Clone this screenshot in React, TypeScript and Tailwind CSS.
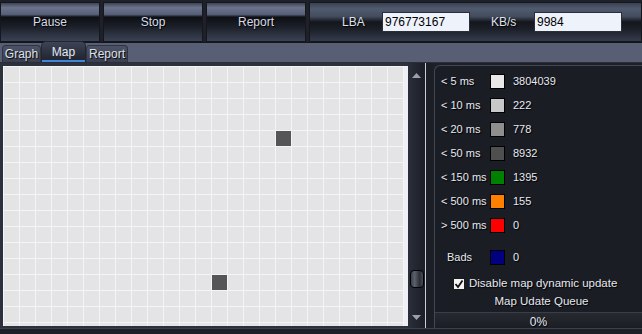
import React from 'react'

const btnBg =
  'bg-[linear-gradient(to_bottom,#3c4454_0%,#6a738a_12%,#566078_30%,#0d0f14_37%,#1b1f28_62%,#3a4254_100%)]'

const legend = [
  { label: '< 5 ms', color: 'bg-[#e8e8e8]', value: '3804039' },
  { label: '< 10 ms', color: 'bg-[#c8c8c8]', value: '222' },
  { label: '< 20 ms', color: 'bg-[#8e8e8e]', value: '778' },
  { label: '< 50 ms', color: 'bg-[#4f4f4f]', value: '8932' },
  { label: '< 150 ms', color: 'bg-[#008000]', value: '1395' },
  { label: '< 500 ms', color: 'bg-[#ff8000]', value: '155' },
  { label: '> 500 ms', color: 'bg-[#ff0000]', value: '0' },
]

// slow blocks on the map: [row, col]
const darkCells = ['4-17', '13-13']

const shadow = '[text-shadow:1px_1px_1px_#000]'

const ToolButton = ({ label }: { label: string }) => (
  <div
    className={`w-[100px] h-[40px] flex items-center justify-center border border-[#15171c] ${btnBg} text-[#d7dbe6] text-[12px] ${shadow}`}
  >
    {label}
  </div>
)

const Tab = ({ label, active, w }: { label: string; active?: boolean; w: string }) =>
  active ? (
    <div
      className={`${w} h-[21px] rounded-t-[5px] border border-[#22262f] border-b-0 bg-[linear-gradient(to_bottom,#3d4456,#262b37_70%,#1f2430)] flex justify-center pt-[1px] text-[#e4e8f2] shadow-[inset_0_-2px_0_#3f86d8]`}
    >
      {label}
    </div>
  ) : (
    <div
      className={`${w} h-[17px] rounded-t-[4px] border border-[#2f3442] border-b-0 bg-[linear-gradient(to_bottom,#4d5366,#3a4052)] flex justify-center items-center text-[#dde1ea] ${shadow}`}
    >
      {label}
    </div>
  )

export default function App() {
  const cells = []
  for (let r = 0; r < 17; r++) {
    for (let c = 0; c < 25; c++) {
      const dark = darkCells.includes(`${r}-${c}`)
      cells.push(<div key={`${r}-${c}`} className={dark ? 'bg-[#555555]' : 'bg-[#e4e4e4]'} />)
    }
  }

  return (
    <div className="w-[642px] h-[334px] overflow-hidden bg-[#585e74] font-['Liberation_Sans',Arial,sans-serif] text-[11px] flex flex-col">
      {/* toolbar */}
      <div className="h-[43px] bg-[#1e2129] flex gap-[3px] pt-[2px] border-b border-[#14161b]">
        <ToolButton label="Pause" />
        <ToolButton label="Stop" />
        <ToolButton label="Report" />
        <div
          className={`flex-1 h-[40px] border border-[#15171c] bg-[linear-gradient(to_bottom,#3a4252_0%,#505a6e_15%,#444d60_35%,#14161c_50%,#1c2029_70%,#343c4c_100%)] flex items-center text-[#dfe3ec] text-[12px] ${shadow}`}
        >
          <span className="ml-[32px] w-[40px]">LBA</span>
          <div className="w-[88px] h-[20px] bg-[#eef2fb] border border-[#2a2e38] text-black pl-[2px] leading-[18px] [text-shadow:none]">
            976773167
          </div>
          <span className="ml-[21px] w-[43px]">KB/s</span>
          <div className="w-[88px] h-[20px] bg-[#eef2fb] border border-[#2a2e38] text-black pl-[2px] leading-[18px] [text-shadow:none]">
            9984
          </div>
        </div>
      </div>

      {/* tabs */}
      <div className="h-[20px] flex items-end pl-[2px] text-[12px] border-b border-[#2a2e3a]">
        <Tab label="Graph" w="w-[39px]" />
        <Tab label="Map" active w="w-[45px]" />
        <Tab label="Report" w="w-[42px]" />
      </div>

      {/* main */}
      <div className="flex h-[265px] bg-[#1d2027]">
        {/* map */}
        <div className="w-[408px] bg-[#2c313c] pl-[3px] pt-[3px] pb-[2px]">
          <div className="h-full bg-[#eef0f6] overflow-hidden">
            <div className="grid grid-cols-[repeat(25,15px)] auto-rows-[15px] gap-px p-px w-[401px] bg-[#f3f3f8]">
              {cells}
            </div>
          </div>
        </div>

        {/* scrollbar */}
        <div className="w-[17px] bg-[linear-gradient(to_right,#2b2f3a,#1b1e25)] flex flex-col items-center pt-[10px] pb-[8px]">
          <svg width="9" height="5" viewBox="0 0 9 5">
            <path d="M0 5 L4.5 0 L9 5 Z" fill="#9aa0ae" />
          </svg>
          <div className="flex-1" />
          <div className="w-[14px] h-[18px] rounded-[4px] border border-black bg-[linear-gradient(to_right,#3a3f48,#5b616c_30%,#2c3038_70%,#444a54)] mb-[27px]" />
          <svg width="9" height="5" viewBox="0 0 9 5">
            <path d="M0 0 L4.5 5 L9 0 Z" fill="#9aa0ae" />
          </svg>
        </div>
        <div className="w-px bg-[#c6cedd]" />
        <div className="w-[8px] bg-[#1c1f26]" />

        {/* legend panel */}
        <div className={`flex-1 mt-[2px] rounded-tl-[6px] border-l border-t border-[#424756] bg-[#1b1d24] flex flex-col text-[#e6e9f1] text-[11px] whitespace-nowrap ${shadow}`}>
          <div className="flex flex-col gap-[9px] pt-[8px]">
            {legend.map((row) => (
              <div key={row.label} className="flex items-center h-[15px]">
                <span className="ml-[6px] w-[49px]">{row.label}</span>
                <div className={`w-[15px] h-[15px] border border-black ${row.color}`} />
                <span className="ml-[8px]">{row.value}</span>
              </div>
            ))}
          </div>
          <div className="flex items-center h-[15px] mt-[17px]">
            <span className="ml-[12px] w-[43px]">Bads</span>
            <div className="w-[15px] h-[15px] border border-black bg-[#000080]" />
            <span className="ml-[8px]">0</span>
          </div>
          <div className="flex items-center mt-[12px] ml-[18px] h-[14px]">
            <div className="w-[12px] h-[12px] bg-[#f4f4f4] border border-[#1a1a1a] flex items-center justify-center [text-shadow:none]">
              <svg width="10" height="10" viewBox="0 0 10 10">
                <path d="M1.5 5 L4 8 L8.5 1.5" stroke="#111" strokeWidth="1.8" fill="none" />
              </svg>
            </div>
            <span className="ml-[4px] text-[11.5px]">Disable map dynamic update</span>
          </div>
          <div className="text-center text-[11.5px] mt-[2px] h-[16px] pl-[6px]">Map Udate Queue</div>
          <div className="mt-[3px] h-[18px] border-t border-[#3a3e4a] bg-[linear-gradient(to_bottom,#262930,#1a1c22)] flex items-center justify-center text-[12px]">
            0%
          </div>
        </div>
      </div>

      {/* bottom edge */}
      <div className="flex-1 bg-[#1d2027] border-t border-[#3c4150]" />
    </div>
  )
}
